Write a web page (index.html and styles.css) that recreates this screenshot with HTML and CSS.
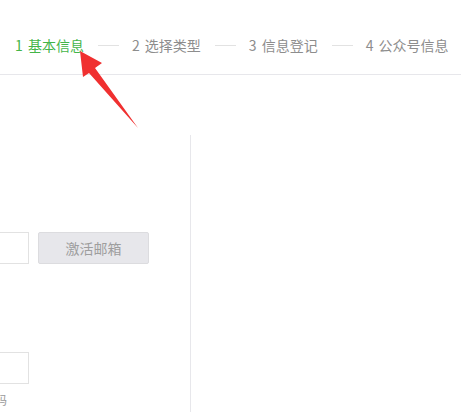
FILE: index.html
```html
<!DOCTYPE html>
<html lang="zh">
<head>
<meta charset="utf-8">
<link rel="stylesheet" href="styles.css">
</head>
<body>
<div class="header">
  <div class="steps">
    <span class="step current">1 基本信息</span>
    <span class="sep"></span>
    <span class="step">2 选择类型</span>
    <span class="sep"></span>
    <span class="step">3 信息登记</span>
    <span class="sep"></span>
    <span class="step">4 公众号信息</span>
  </div>
</div>
<div class="main">
  <div class="left">
    <div class="form">
      <div class="row first">
        <div class="input"></div>
        <div class="btn">激活邮箱</div>
      </div>
      <div class="row second">
        <div class="input"></div>
      </div>
      <div class="tip">请输入验证码</div>
    </div>
  </div>
  <div class="right"></div>
</div>
<svg class="arrow" width="70" height="90" viewBox="0 0 70 90">
  <polygon points="10,11 32,23 25,28 68,88 19,33 13,37" fill="#f03030"/>
</svg>
</body>
</html>
```

FILE: styles.css
```css
html, body {
  margin: 0;
  padding: 0;
  background: #ffffff;
  overflow: hidden;
}
body {
  width: 461px;
  height: 412px;
  font-family: "Microsoft YaHei", "Noto Sans CJK SC", "Noto Sans", sans-serif;
  font-size: 14px;
  color: #8d8d8d;
  position: relative;
}
.header {
  height: 74px;
  border-bottom: 1px solid #e7e7eb;
  box-sizing: content-box;
}
.steps {
  display: flex;
  align-items: center;
  padding-top: 35px;
  padding-left: 15px;
  height: 20px;
  line-height: 20px;
}
.step {
  white-space: nowrap;
  color: #8d8d8d;
  word-spacing: 2px;
}
.step.current {
  color: #44b549;
}
.sep {
  width: 21px;
  height: 1px;
  background: #e2e2e2;
  margin: 0 13px 0 14px;
}
.main {
  display: flex;
  height: 337px;
}
.left {
  width: 190px;
  margin-top: 60px;
  border-right: 1px solid #e7e7eb;
}
.form {
  margin-left: -140px;
  padding-top: 97px;
}
.row {
  display: flex;
  gap: 9px;
}
.input {
  width: 167px;
  height: 30px;
  border: 1px solid #e2e2e2;
}
.btn {
  width: 109px;
  height: 30px;
  border: 1px solid #dcdcdf;
  background: #e7e7eb;
  color: #9e9e9e;
  border-radius: 2px;
  text-align: center;
  line-height: 30px;
}
.second {
  margin-top: 88px;
}
.tip {
  margin-top: 8px;
  font-size: 12px;
  line-height: 16px;
  color: #9a9a9a;
  padding-left: 75px;
}
.right {
  flex: 1;
}
.arrow {
  position: absolute;
  left: 70px;
  top: 40px;
}
```
